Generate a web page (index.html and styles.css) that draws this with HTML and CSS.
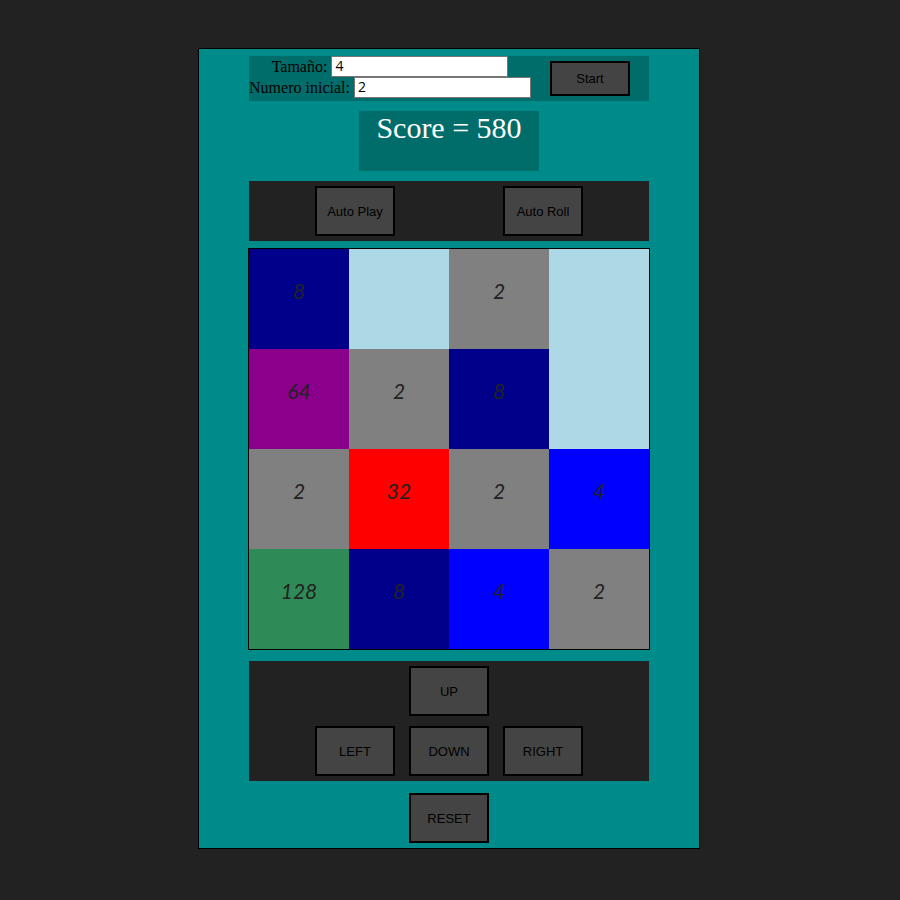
FILE: index.html
```html
<!DOCTYPE html>
<html lang="es">
<head>
  <meta charset="utf-8">
  <title>2048</title>
  <link rel="stylesheet" href="styles.css">
</head>
<body>
  <main class="game">
    <form class="settings">
      <div class="fields">
        <div class="field">
          <label for="size">Tamaño:</label>
          <input id="size" type="text" value="4">
        </div>
        <div class="field">
          <label for="initial">Numero inicial:</label>
          <input id="initial" type="text" value="2">
        </div>
      </div>
      <button class="button button-small" type="button">Start</button>
    </form>

    <div class="score">Score = 580</div>

    <div class="auto">
      <button class="button" type="button">Auto Play</button>
      <button class="button" type="button">Auto Roll</button>
    </div>

    <div class="board">
      <div class="tile t8">8</div>
      <div class="tile"></div>
      <div class="tile t2">2</div>
      <div class="tile"></div>
      <div class="tile t64">64</div>
      <div class="tile t2">2</div>
      <div class="tile t8">8</div>
      <div class="tile"></div>
      <div class="tile t2">2</div>
      <div class="tile t32">32</div>
      <div class="tile t2">2</div>
      <div class="tile t4">4</div>
      <div class="tile t128">128</div>
      <div class="tile t8">8</div>
      <div class="tile t4">4</div>
      <div class="tile t2">2</div>
    </div>

    <div class="controls">
      <button class="button up" type="button">UP</button>
      <button class="button" type="button">LEFT</button>
      <button class="button" type="button">DOWN</button>
      <button class="button" type="button">RIGHT</button>
    </div>

    <button class="button" type="button">RESET</button>
  </main>
</body>
</html>
```

FILE: styles.css
```css
* {
  box-sizing: border-box;
}

body {
  margin: 0;
  padding: 48px 2px 48px 0;
  background: #222;
  font: 16px "Liberation Serif", serif;
}

.game {
  display: flex;
  flex-direction: column;
  align-items: center;
  width: 100%;
  max-width: 502px;
  margin: 0 auto;
  padding: 7px 50px 5px;
  border: 1px solid #000;
  background: darkcyan;
}

.settings {
  display: flex;
  width: 100%;
  height: 45px;
  background: #006d6b;
}

.fields {
  width: 282px;
}

.field {
  display: flex;
  align-items: center;
  justify-content: center;
  gap: 4px;
  height: 21px;
  line-height: 18px;
  white-space: nowrap;
}

.field input {
  width: 177px;
  height: 21px;
  padding: 0 3px 2px;
  border: 1px solid #767676;
  background: #fff;
  color: #000;
  font-family: "Open Sans", sans-serif;
  font-size: 14px;
}

.button {
  width: 80px;
  height: 50px;
  padding: 0;
  border: 2px solid #000;
  background: #444;
  color: #000;
  font: 13px "Liberation Sans", sans-serif;
}

.button-small {
  height: 35px;
  margin: 5px auto;
}

.score {
  width: 180px;
  height: 60px;
  margin: 10px 0;
  background: #006d6b;
  color: #fff;
  font-size: 30px;
  line-height: 34px;
  text-align: center;
}

.auto {
  display: flex;
  justify-content: center;
  gap: 108px;
  width: 100%;
  padding: 5px 0;
  background: #222;
}

.board {
  display: grid;
  grid-template-columns: repeat(4, 100px);
  margin: 7px 0 11px;
  border: 1px solid #000;
  background: lightblue;
}

.tile {
  height: 100px;
  padding-top: 30px;
  color: #222;
  font: italic 21px/24px Lato, sans-serif;
  text-align: center;
}

.t2 { background: gray; }
.t4 { background: blue; }
.t8 { background: darkblue; }
.t32 { background: red; }
.t64 { background: darkmagenta; }
.t128 { background: seagreen; }

.controls {
  display: grid;
  grid-template-columns: repeat(3, 80px);
  justify-content: center;
  gap: 10px 14px;
  width: 100%;
  margin-bottom: 12px;
  padding: 5px 0;
  background: #222;
}

.up {
  grid-column: 2;
}

.up + .button {
  grid-column: 1;
}
```
